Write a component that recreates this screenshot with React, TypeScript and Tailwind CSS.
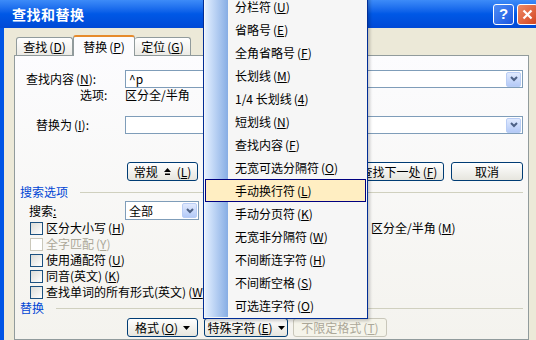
import React from 'react'

const menuItems: [string, string][] = [
  ['分栏符', 'U'],
  ['省略号', 'E'],
  ['全角省略号', 'F'],
  ['长划线', 'M'],
  ['1/4 长划线', '4'],
  ['短划线', 'N'],
  ['查找内容', 'F'],
  ['无宽可选分隔符', 'O'],
  ['手动换行符', 'L'],
  ['手动分页符', 'K'],
  ['无宽非分隔符', 'W'],
  ['不间断连字符', 'H'],
  ['不间断空格', 'S'],
  ['可选连字符', 'O'],
]

// accelerator key like (N)
const Acc = ({ k }: { k: string }) => (
  <span className="ml-[2px]">
    (<span className="underline underline-offset-1">{k}</span>)
  </span>
)

const DropBtn = () => (
  <div className="w-[15px] h-[15px] rounded-[2px] border border-[#B9CDF5] bg-gradient-to-b from-[#E1EAFE] to-[#B4CAF7] flex items-center justify-center">
    <svg width="8" height="6" viewBox="0 0 8 6">
      <path d="M1 1 L4 4 L7 1" stroke="#4D6185" strokeWidth="2" fill="none" />
    </svg>
  </div>
)

const XpButton = ({
  children,
  className = '',
  disabled = false,
}: {
  children: React.ReactNode
  className?: string
  disabled?: boolean
}) => (
  <div
    className={`h-[19px] rounded-[3px] border flex items-center justify-center ${
      disabled
        ? 'border-[#C9C7BA] bg-[#F5F4EA] text-[#ACA899]'
        : 'border-[#003C74] bg-gradient-to-b from-white to-[#E6E5DE] text-black'
    } ${className}`}
  >
    {children}
  </div>
)

const Caret = () => (
  <svg width="7" height="4" viewBox="0 0 7 4" className="ml-[5px]">
    <path d="M0 0 H7 L3.5 4 Z" fill="#000" />
  </svg>
)

const Checkbox = ({
  label,
  k,
  checked = false,
  disabled = false,
}: {
  label: string
  k: string
  checked?: boolean
  disabled?: boolean
}) => (
  <div className={`flex items-center h-[16px] ${disabled ? 'text-[#ACA899]' : 'text-black'}`}>
    <div
      className={`w-[13px] h-[13px] border flex items-center justify-center ${
        disabled
          ? 'border-[#CAC8BB] bg-white'
          : 'border-[#1C5180] bg-gradient-to-br from-[#DCDCD7] to-white'
      }`}
    >
      {checked && (
        <svg width="9" height="9" viewBox="0 0 9 9">
          <path d="M1 4 L3.5 6.5 L8 1.5" stroke="#21A121" strokeWidth="2" fill="none" />
        </svg>
      )}
    </div>
    <span className="ml-[3px]">
      {label}
      <Acc k={k} />
    </span>
  </div>
)

const Section = ({ title, gap }: { title: string; gap: string }) => (
  <div className="flex items-center h-[16px] pl-[5px] pr-[5px]">
    <span className="text-[#0046D5]">{title}</span>
    <div className={`flex-1 h-px bg-[#D0D0BF] ${gap}`} />
  </div>
)

export default function App() {
  return (
    <div className="relative w-[536px] h-[340px] overflow-hidden bg-[#ECE9D8] text-[12px] leading-[14px] font-['Noto_Sans_CJK_SC','Noto_Sans',sans-serif]">
      <div className="flex flex-col w-[545px] h-full">
        {/* Title bar */}
        <div className="h-[28px] flex items-center pl-[12px] pr-[7px] bg-gradient-to-b from-[#3D8BF8] via-[#0058E6] to-[#0049D6]">
          <span className="text-white font-bold text-[14px] tracking-[0.5px]">查找和替换</span>
          <div className="flex-1" />
          <div className="w-[21px] h-[21px] rounded-[3px] border border-white bg-gradient-to-br from-[#4F8CF5] to-[#1A55E0] flex items-center justify-center text-white font-bold text-[15px] font-['Liberation_Sans',sans-serif]">
            ?
          </div>
          <div className="ml-[3px] w-[21px] h-[21px] rounded-[3px] border border-white bg-gradient-to-br from-[#EE8A66] to-[#D2411A] flex items-center justify-center">
            <svg width="11" height="11" viewBox="0 0 11 11">
              <path d="M1.5 1.5 L9.5 9.5 M9.5 1.5 L1.5 9.5" stroke="#fff" strokeWidth="2.2" />
            </svg>
          </div>
        </div>

        {/* Body */}
        <div className="flex-1 flex flex-col border-l-4 border-[#0055E5] pl-[10px] pt-[7px]">
          {/* Tabs */}
          <div className="flex items-end h-[20px] pl-[2px] relative z-10">
            <div className="h-[18px] w-[57px] border border-b-0 border-[#919B9C] rounded-t-[3px] bg-gradient-to-b from-white to-[#ECEBE6] flex items-center justify-center">
              查找<Acc k="D" />
            </div>
            <div className="h-[21px] w-[62px] -mb-px border-x border-[#919B9C] border-t-2 border-t-[#E68B2C] rounded-t-[3px] bg-[#FCFCFE] flex items-center justify-center">
              替换<Acc k="P" />
            </div>
            <div className="h-[18px] w-[56px] border border-b-0 border-l-0 border-[#919B9C] rounded-t-[3px] bg-gradient-to-b from-white to-[#ECEBE6] flex items-center justify-center">
              定位<Acc k="G" />
            </div>
          </div>

          {/* Tab panel */}
          <div className="flex-1 w-[515px] border border-[#919B9C] bg-gradient-to-b from-[#FCFCFE] to-[#F4F3EE] flex flex-col">
            <div className="mt-[14px] flex items-center h-[18px]">
              <div className="w-[110px] pl-[11px]">
                查找内容<Acc k="N" />:
              </div>
              <div className="w-[398px] h-[18px] border border-[#7F9DB9] bg-white flex items-center justify-between pl-[3px] pr-px">
                <span>^p</span>
                <DropBtn />
              </div>
            </div>
            <div className="flex items-center h-[14px]">
              <div className="w-[110px] pl-[65px]">选项:</div>
              <div>区分全/半角</div>
            </div>
            <div className="mt-[14px] flex items-center h-[18px]">
              <div className="w-[110px] pl-[21px]">
                替换为<Acc k="I" />:
              </div>
              <div className="w-[398px] h-[18px] border border-[#7F9DB9] bg-white flex items-center justify-end pr-px">
                <DropBtn />
              </div>
            </div>

            {/* Buttons */}
            <div className="mt-[28px] flex items-center h-[19px] pl-[112px] pr-[5px]">
              <XpButton className="w-[71px]">
                常规
                <svg width="7" height="8" viewBox="0 0 7 8" className="mx-[6px]">
                  <path d="M3.5 0 L7 4 H0 Z" fill="#000" />
                  <rect x="1" y="5.5" width="5" height="1.5" fill="#000" />
                </svg>
                <span>
                  (<span className="underline">L</span>)
                </span>
              </XpButton>
              <div className="flex-1" />
              <XpButton className="w-[90px]">
                查找下一处<Acc k="F" />
              </XpButton>
              <XpButton className="ml-[7px] w-[72px]">取消</XpButton>
            </div>

            <div className="mt-[3px]">
              <Section title="搜索选项" gap="ml-[12px]" />
            </div>

            <div className="mt-[1px] flex items-center h-[19px]">
              <div className="w-[110px] pl-[14px]">
                搜索<span className="underline">:</span>
              </div>
              <div className="w-[74px] h-[19px] border border-[#7F9DB9] bg-white flex items-center justify-between pl-[3px] pr-px">
                <span>全部</span>
                <DropBtn />
              </div>
            </div>

            <div className="flex flex-col">
              <div className="flex">
                <div className="w-[340px] pl-[15px]">
                  <Checkbox label="区分大小写" k="H" />
                </div>
                <Checkbox label="区分全/半角" k="M" checked />
              </div>
              <div className="pl-[15px]">
                <Checkbox label="全字匹配" k="Y" disabled />
              </div>
              <div className="pl-[15px]">
                <Checkbox label="使用通配符" k="U" />
              </div>
              <div className="pl-[15px]">
                <Checkbox label="同音(英文)" k="K" />
              </div>
              <div className="pl-[15px]">
                <Checkbox label="查找单词的所有形式(英文)" k="W" />
              </div>
            </div>

            <Section title="替换" gap="ml-[12px]" />

            <div className="mt-[2px] flex items-center h-[19px] pl-[112px]">
              <XpButton className="w-[71px]">
                格式<Acc k="O" />
                <Caret />
              </XpButton>
              <XpButton className="ml-[6px] w-[84px]">
                特殊字符<Acc k="E" />
                <Caret />
              </XpButton>
              <XpButton className="ml-[5px] w-[94px]" disabled>
                不限定格式<Acc k="T" />
              </XpButton>
            </div>
          </div>
        </div>
      </div>

      {/* Special characters popup menu */}
      <div className="absolute left-[203px] top-[-7px] w-[165px] border border-[#002D96] bg-[#F6F6F6] p-px z-20 shadow-[2px_2px_3px_rgba(0,0,0,0.2)]">
        {menuItems.map(([label, k], i) => {
          const active = label === '手动换行符'
          return (
            <div
              key={i}
              className={`h-[23px] flex items-center ${
                active ? 'border border-[#000080] bg-[#FFEEC2]' : ''
              }`}
            >
              <div
                className={`h-full ${
                  active ? 'w-[22px]' : 'w-[23px] bg-gradient-to-r from-[#E3EFFF] to-[#87ADE4]'
                }`}
              />
              <span className="pl-[7px] whitespace-nowrap">
                {label}
                <Acc k={k} />
              </span>
            </div>
          )
        })}
      </div>
    </div>
  )
}
